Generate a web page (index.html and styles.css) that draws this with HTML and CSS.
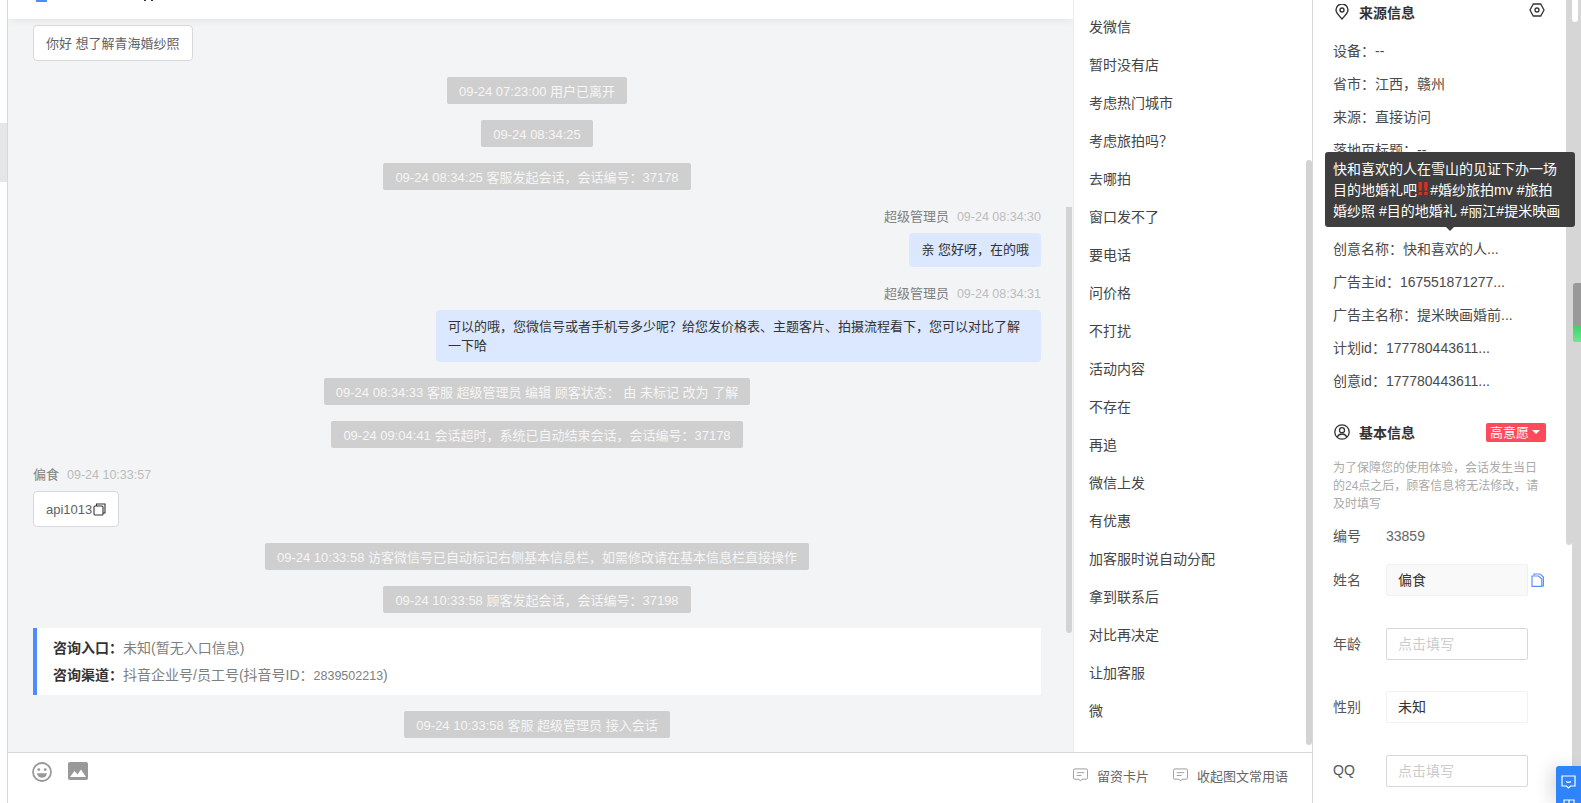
FILE: index.html
```html
<!DOCTYPE html>
<html lang="zh-CN">
<head>
  <meta charset="UTF-8" />
  <title>会话详情</title>
  <link rel="stylesheet" href="styles.css">
</head>
<body>
  <div class="app">
    <div class="rail"><div class="rail-tab"></div></div>

    <div class="workspace">
      <div class="panes">
        <section class="chat">
          <div class="chat-top"><span class="chat-top-mark"></span><span class="chat-top-glyph"></span></div>
          <div class="chat-scroll">
            <div class="messages">
              <div class="bubble bubble-left">你好 想了解青海婚纱照</div>
              <div class="pill">09-24 07:23:00 用户已离开</div>
              <div class="pill">09-24 08:34:25</div>
              <div class="pill">09-24 08:34:25 客服发起会话，会话编号：37178</div>

              <div class="msg msg-right">
                <div class="msg-meta">超级管理员<span class="msg-time">09-24 08:34:30</span></div>
                <div class="bubble bubble-right">亲 您好呀，在的哦</div>
              </div>
              <div class="msg msg-right">
                <div class="msg-meta">超级管理员<span class="msg-time">09-24 08:34:31</span></div>
                <div class="bubble bubble-right">可以的哦，您微信号或者手机号多少呢？给您发价格表、主题客片、拍摄流程看下，您可以对比了解一下哈</div>
              </div>

              <div class="pill">09-24 08:34:33 客服 超级管理员 编辑 顾客状态： 由 未标记 改为 了解</div>
              <div class="pill">09-24 09:04:41 会话超时，系统已自动结束会话，会话编号：37178</div>

              <div class="msg">
                <div class="msg-meta">偏食<span class="msg-time">09-24 10:33:57</span></div>
                <div class="bubble bubble-left">api1013<svg class="copy-icon" viewBox="0 0 13 13" width="13" height="13" fill="none" stroke="#333" stroke-width="1.1"><rect x="1" y="3" width="9" height="9" rx="1"/><path d="M3.5 3V1h8.5v9h-2"/></svg></div>
              </div>

              <div class="pill">09-24 10:33:58 访客微信号已自动标记右侧基本信息栏，如需修改请在基本信息栏直接操作</div>
              <div class="pill">09-24 10:33:58 顾客发起会话，会话编号：37198</div>

              <div class="entry-card">
                <div class="entry-row"><b>咨询入口：</b>未知(暂无入口信息)</div>
                <div class="entry-row"><b>咨询渠道：</b>抖音企业号/员工号(抖音号ID：<span class="entry-id">2839502213</span>)</div>
              </div>

              <div class="pill">09-24 10:33:58 客服 超级管理员 接入会话</div>
            </div>
            <div class="chat-thumb"></div>
          </div>
        </section>

        <aside class="quick">
          <ul class="quick-list">
            <li>发微信</li>
            <li>暂时没有店</li>
            <li>考虑热门城市</li>
            <li>考虑旅拍吗？</li>
            <li>去哪拍</li>
            <li>窗口发不了</li>
            <li>要电话</li>
            <li>问价格</li>
            <li>不打扰</li>
            <li>活动内容</li>
            <li>不存在</li>
            <li>再追</li>
            <li>微信上发</li>
            <li>有优惠</li>
            <li>加客服时说自动分配</li>
            <li>拿到联系后</li>
            <li>对比再决定</li>
            <li>让加客服</li>
            <li>微</li>
          </ul>
          <div class="quick-thumb"></div>
        </aside>
      </div>

      <div class="composer">
        <div class="composer-tools">
          <svg viewBox="0 0 20 20" width="20" height="20" fill="none" stroke="#999" stroke-width="1.8"><circle cx="10" cy="10" r="9"/><circle cx="6.8" cy="7.6" r="1.4" fill="#999" stroke="none"/><circle cx="13.2" cy="7.6" r="1.4" fill="#999" stroke="none"/><path d="M5 11.2h10c-.4 3-2.500 4.600-5 4.600s-4.600-1.600-5-4.600z" fill="#999" stroke="none"/></svg>
          <svg viewBox="0 0 20 18" width="20" height="18"><rect width="20" height="18" rx="2" fill="#999"/><path d="M2 15l4.500-6 3 3.500 3.500-5 5 7.500z" fill="#fff"/></svg>
        </div>
        <div class="composer-links">
          <span class="composer-link"><svg viewBox="0 0 16 14" width="15" height="14" fill="none" stroke="#999"><path d="M2 .5h12a1.500 1.500 0 0 1 1.500 1.500v8a1.500 1.500 0 0 1-1.500 1.500h-4.500L8 13.500l-1.500-2H2A1.500 1.500 0 0 1 .5 10V2A1.500 1.500 0 0 1 2 .5z"/><path d="M4 4.500h8M4 7.500h5"/></svg>留资卡片</span>
          <span class="composer-link"><svg viewBox="0 0 16 14" width="15" height="14" fill="none" stroke="#999"><path d="M2 .5h12a1.500 1.500 0 0 1 1.500 1.500v8a1.500 1.500 0 0 1-1.500 1.500h-4.500L8 13.500l-1.500-2H2A1.500 1.500 0 0 1 .5 10V2A1.500 1.500 0 0 1 2 .5z"/><path d="M4 4.500h8M4 7.500h5"/></svg>收起图文常用语</span>
        </div>
      </div>
    </div>

    <aside class="side">
      <div class="side-head">
        <svg viewBox="0 0 14 16" width="14" height="16" fill="none" stroke="#333" stroke-width="1.4"><path d="M7 15C3.500 11 1 8.800 1 6a6 6 0 0 1 12 0c0 2.800-2.500 5-6 9z"/><circle cx="7" cy="6" r="2"/></svg>
        <h3>来源信息</h3>
        <svg class="side-head-end" viewBox="0 0 16 14" width="16" height="14" fill="none" stroke="#333" stroke-width="1.3"><path d="M4.300 1h7.400L15 7l-3.300 6H4.300L1 7z"/><circle cx="8" cy="7" r="2"/></svg>
      </div>
      <ul class="source-list">
        <li>设备：--</li>
        <li>省市：江西，赣州</li>
        <li>来源：直接访问</li>
        <li>落地页标题：--</li>
        <li>落地页地址：--</li>
        <li>计划名称：aweme_promot...</li>
        <li>创意名称：快和喜欢的人...</li>
        <li>广告主id：167551871277...</li>
        <li>广告主名称：提米映画婚前...</li>
        <li>计划id：177780443611...</li>
        <li>创意id：177780443611...</li>
      </ul>

      <div class="side-head side-head-basic">
        <svg viewBox="0 0 16 16" width="16" height="16" fill="none" stroke="#333" stroke-width="1.300"><circle cx="8" cy="8" r="7.200"/><circle cx="8" cy="6.200" r="2.500"/><path d="M3.200 13c1-2.200 2.800-3 4.800-3s3.800.8 4.800 3"/></svg>
        <h3>基本信息</h3>
        <span class="level-badge">高意愿<i class="level-caret"></i></span>
      </div>
      <p class="side-note">为了保障您的使用体验，会话发生当日的24点之后，顾客信息将无法修改，请及时填写</p>

      <div class="field field-plain"><label>编号</label><span class="field-value">33859</span></div>
      <div class="field"><label>姓名</label><div class="box box-locked">偏食</div>
        <svg class="box-copy" viewBox="0 0 13 14" width="13" height="14" fill="none" stroke="#5b8ff9" stroke-width="1.200"><path d="M3 2.500V1h6l3.400 3v9H11"/><path d="M1 3h6.500L10.800 6v7.300H1z" fill="#fff"/></svg>
      </div>
      <div class="field"><label>年龄</label><div class="box box-empty">点击填写</div></div>
      <div class="field"><label>性别</label><div class="box box-select">未知</div></div>
      <div class="field"><label>QQ</label><div class="box box-empty">点击填写</div></div>
    </aside>

    <div class="side-thumb-col"><div class="side-thumb"></div></div>
    <div class="page-track">
      <div class="page-track-notch"></div>
      <div class="page-thumb"><div class="page-thumb-fill"></div></div>
    </div>
  </div>

  <div class="tooltip">快和喜欢的人在雪山的见证下办一场目的地婚礼吧<span class="tooltip-mark">‼</span>#婚纱旅拍mv #旅拍婚纱照 #目的地婚礼 #丽江#提米映画</div>

  <div class="float-btn">
    <svg viewBox="0 0 15 14" width="15" height="14" fill="none" stroke="#fff" stroke-width="1.200"><path d="M1 1h13v10H9.500l-2 2-2-2H1z"/><path d="M5 6.500c1.500 1 3.500 1 5 0"/></svg>
    <svg viewBox="0 0 12 12" width="12" height="12" fill="none" stroke="#fff" stroke-width="1.200"><path d="M1 1h10v10H1zM6 1v10M1 6h10"/></svg>
  </div>
</body>
</html>
```

FILE: styles.css
```css
* {
  box-sizing: border-box;
}
html, body {
  margin: 0;
  height: 803px;
  overflow: hidden;
}
body {
  font-family: "Liberation Sans", "Noto Sans CJK SC", sans-serif;
  font-size: 13px;
  color: #333;
  background-color: #fff;
  position: relative;
}
ul {
  list-style: none;
  margin: 0;
  padding: 0;
}
.app {
  display: flex;
  height: 803px;
}

/* left rail */
.rail {
  width: 8px;
  flex: none;
  padding-top: 123px;
  border-right: 1px solid #d8d8d8;
}
.rail-tab {
  height: 59px;
  background-color: #e6e6e6;
}

/* chat + quick replies */
.workspace {
  width: 1305px;
  flex: none;
  display: flex;
  flex-direction: column;
  border-right: 1px solid #d8d8d8;
}
.panes {
  height: 752px;
  display: flex;
  flex: none;
}
.chat {
  width: 1065px;
  flex: none;
  display: flex;
  flex-direction: column;
  background-color: #f3f4f6;
  overflow: hidden;
}
.chat-top {
  height: 19px;
  flex: none;
  background-color: #fff;
  box-shadow: 0 2px 8px rgba(0,0,0,0.06);
  position: relative;
  display: flex;
  padding-left: 28px;
}
.chat-top-mark {
  width: 11px;
  height: 2px;
  background-color: #4d8cff;
}
.chat-top-glyph {
  width: 9px;
  height: 1px;
  margin-left: 97px;
  border-left: 2px solid #333;
  border-right: 2px solid #333;
}
.chat-scroll {
  flex: 1;
  display: flex;
  min-height: 0;
}
.messages {
  width: 1058px;
  flex: none;
  padding: 6px 25px 0;
  display: flex;
  flex-direction: column;
  gap: 16px;
}
.pill {
  align-self: center;
  height: 27px;
  line-height: 29px;
  padding: 0 12px;
  background-color: #cfcfcf;
  color: #f6f6f6;
  border-radius: 2px;
  white-space: nowrap;
}
.bubble {
  padding: 7px 12px;
  line-height: 20px;
  border-radius: 4px;
}
.bubble-left {
  align-self: flex-start;
  background-color: #fff;
  border: 1px solid #d9d9dc;
  color: #606266;
  display: flex;
  align-items: center;
  gap: 1px;
  padding: 8px 12px 6px;
}
.bubble-left .copy-icon {
  margin-top: -2px;
}
.bubble-right {
  background-color: #dbe8ff;
  color: #333;
  max-width: 605px;
  min-height: 34px;
  line-height: 19px;
}
.msg {
  margin-top: 1px;
  display: flex;
  flex-direction: column;
  align-items: flex-start;
}
.msg-right {
  align-items: flex-end;
}
.msg-meta {
  height: 20px;
  line-height: 20px;
  margin-bottom: 6px;
  color: #7f7f7f;
}
.msg-time {
  margin-left: 8px;
  font-size: 12.5px;
  color: #bcbcbc;
}
.entry-card {
  margin-top: -1px;
  height: 67px;
  padding: 7px 16px;
  background-color: #fff;
  border-left: 4px solid #4d8cff;
  color: #808080;
  font-size: 14px;
}
.entry-row {
  height: 27px;
  line-height: 27px;
}
.entry-row b {
  color: #333;
  font-weight: 700;
}
.entry-id {
  font-size: 12.5px;
}
.chat-thumb {
  width: 6px;
  height: 426px;
  margin-top: 188px;
  background-color: #d3d3d3;
  border-radius: 0 0 3px 3px;
}

.quick {
  flex: 1;
  display: flex;
  justify-content: space-between;
  border-left: 1px solid #ececec;
  background-color: #fff;
}
.quick-list {
  padding: 8px 0 0 15px;
  font-size: 14px;
  color: #444;
}
.quick-list li {
  height: 38px;
  line-height: 38px;
}
.quick-thumb {
  width: 6px;
  height: 585px;
  margin-top: 160px;
  background-color: #d3d3d3;
  border-radius: 3px;
}

/* bottom bar */
.composer {
  flex: 1;
  border-top: 1px solid #d8d8d8;
  display: flex;
  justify-content: space-between;
  padding: 9px 24px 0 24px;
}
.composer-tools {
  display: flex;
  align-items: flex-start;
  gap: 16px;
}
.composer-links {
  display: flex;
  gap: 24px;
  padding-top: 6px;
  height: 30px;
  color: #666;
}
.composer-link {
  display: flex;
  align-items: center;
  gap: 9px;
  height: 14px;
}

/* right panel */
.side {
  width: 253px;
  flex: none;
  padding: 0 20px;
  color: #4a4a4a;
  font-size: 14px;
}
.side-head {
  height: 26px;
  display: flex;
  align-items: center;
  position: relative;
  padding-left: 2px;
  margin-right: 1px;
  margin-top: -1px;
}
.side-head h3 {
  margin: 0 0 0 10px;
  font-size: 14px;
  font-weight: 700;
  color: #333;
}
.side-head-end {
  margin-left: auto;
  margin-top: -4px;
}
.source-list {
  padding-top: 10px;
}
.source-list li {
  height: 33px;
  line-height: 33px;
  white-space: nowrap;
}
.side-head-basic {
  margin-top: 21px;
  margin-right: 0;
  height: 26px;
  padding-left: 1px;
}
.side-head-basic h3 {
  margin-left: 9px;
}
.level-badge {
  margin-left: auto;
  width: 60px;
  height: 19px;
  line-height: 19px;
  background-color: #ff4a5a;
  color: #fff;
  font-size: 13px;
  border-radius: 2px;
  padding-left: 4px;
  display: flex;
  align-items: center;
  gap: 3px;
}
.level-caret {
  border-left: 4px solid transparent;
  border-right: 4px solid transparent;
  border-top: 4px solid #fff;
}
.side-note {
  margin: 14px 0 0;
  font-size: 12px;
  line-height: 18px;
  color: #aaa;
}
.field {
  display: flex;
  align-items: center;
  height: 32px;
  margin-top: 31.5px;
}
.field-plain {
  margin-top: 14px;
  height: 18px;
  margin-bottom: -12.5px;
}
.field label {
  width: 53px;
  flex: none;
  color: #555;
  margin-top: -2px;
}
.field-value {
  color: #666;
}
.box {
  width: 142px;
  height: 32px;
  line-height: 31px;
  padding: 0 11px;
  border-radius: 2px;
  border: 1px solid #f1f1f1;
  color: #333;
}
.box-locked {
  background-color: #f9f9f9;
}
.box-empty {
  border: 1.5px solid #d8d8d8;
  color: #ccc;
}
.box-copy {
  margin-left: 3px;
}

/* right-hand scrollbars */
.side-thumb-col {
  width: 6px;
  flex: none;
}
.side-thumb {
  height: 545px;
  background-color: #d6d6d6;
  border-radius: 0 0 3px 3px;
}
.page-track {
  width: 9px;
  flex: none;
  background-color: #d6d6d6;
  position: relative;
}
.page-track-notch {
  width: 6px;
  height: 22px;
  background-color: #fff;
  border-radius: 0 0 3px 3px;
}
.page-thumb {
  position: absolute;
  top: 283px;
  left: 1px;
  right: 0;
  height: 59px;
  background-color: #999;
  border-radius: 3px 0 0 3px;
  overflow: hidden;
  display: flex;
  align-items: flex-end;
}
.page-thumb-fill {
  width: 100%;
  height: 17px;
  background: linear-gradient(#3fcf6c, #6fe893);
}

/* overlays */
.tooltip {
  position: absolute;
  left: 1325px;
  top: 152px;
  width: 250px;
  height: 75px;
  padding: 7px 14px 6px 8px;
  background-color: #3e3e3e;
  color: #fff;
  font-size: 14px;
  line-height: 21px;
  border-radius: 3px;
}
.tooltip::after {
  content: "";
  position: absolute;
  left: 121px;
  bottom: -4px;
  border-left: 4px solid transparent;
  border-right: 4px solid transparent;
  border-top: 4px solid #3e3e3e;
}
.tooltip-mark {
  color: #d9301e;
  font-family: "DejaVu Sans", sans-serif;
  font-size: 18px;
  font-weight: 700;
  line-height: 1;
  margin-right: 2px;
}
.float-btn {
  position: absolute;
  left: 1556px;
  top: 766px;
  width: 25px;
  height: 37px;
  padding-top: 9px;
  background-color: #2d84fb;
  border-radius: 3px 0 0 0;
  box-shadow: -6px 0 16px rgba(0,0,0,0.12);
  display: flex;
  flex-direction: column;
  align-items: center;
  gap: 10px;
  overflow: hidden;
}
.float-btn svg {
  flex: none;
}
```
